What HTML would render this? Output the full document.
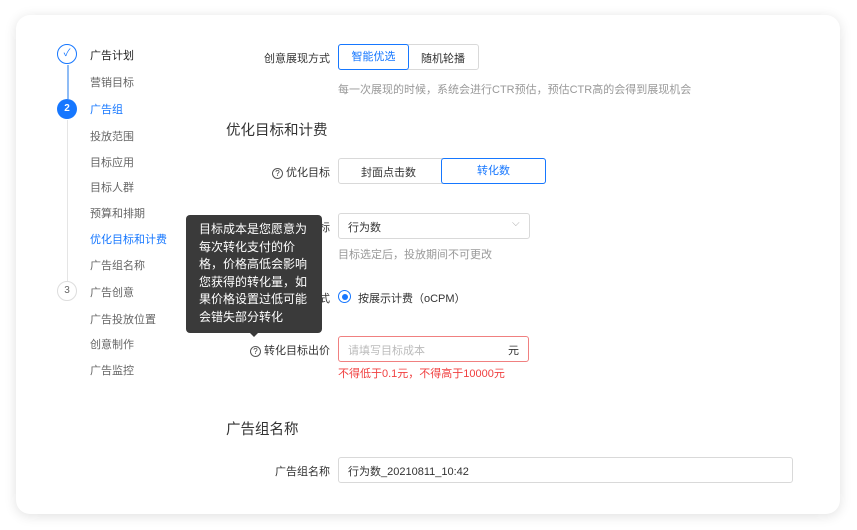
<!DOCTYPE html>
<html><head><meta charset="utf-8"><style>
*{margin:0;padding:0;box-sizing:border-box}
body{width:857px;height:530px;background:#fff;font-family:"Liberation Sans","Noto Sans CJK SC",sans-serif;font-size:11px;color:#333;position:relative;overflow:hidden}
.card{position:absolute;left:16px;top:15px;width:824px;height:499px;background:#fff;border-radius:14px;box-shadow:0 2px 12px rgba(0,0,0,.12)}
.a{position:absolute;white-space:nowrap}
.nav{color:#666}
.circ{position:absolute;width:20px;height:20px;border-radius:50%;text-align:center;line-height:18px;font-size:10px}
.lbl{color:#333;text-align:right}
.box{position:absolute;border:1px solid #d9d9d9;border-radius:3px}
.h{font-size:14.5px;color:#333}
.q{display:inline-block;width:11px;height:11px;border:1px solid #555;border-radius:50%;font-size:8px;line-height:9px;text-align:center;vertical-align:0px;margin-right:3px}
</style></head><body>
<div class="card"></div>
<div class="circ" style="left:57px;top:44px;border:1px solid #1677ff;color:#1677ff">✓</div>
<div style="position:absolute;left:67px;top:65px;width:2px;height:34px;background:#8fbcf5"></div>
<div class="circ" style="left:57px;top:99px;background:#1677ff;color:#fff;font-weight:bold;line-height:20px">2</div>
<div style="position:absolute;left:67px;top:120px;width:1px;height:162px;background:#e5e5e5"></div>
<div class="circ" style="left:57px;top:281px;border:1px solid #ddd;color:#666">3</div>
<div class="a" style="left:90px;top:47px;color:#222">广告计划</div>
<div class="a nav" style="left:90px;top:74px">营销目标</div>
<div class="a" style="left:90px;top:101px;color:#1677ff">广告组</div>
<div class="a nav" style="left:90px;top:128px">投放范围</div>
<div class="a nav" style="left:90px;top:154px">目标应用</div>
<div class="a nav" style="left:90px;top:179px">目标人群</div>
<div class="a nav" style="left:90px;top:205px">预算和排期</div>
<div class="a" style="left:90px;top:231px;color:#1677ff">优化目标和计费</div>
<div class="a nav" style="left:90px;top:257px">广告组名称</div>
<div class="a nav" style="left:90px;top:284px">广告创意</div>
<div class="a nav" style="left:90px;top:311px">广告投放位置</div>
<div class="a nav" style="left:90px;top:336px">创意制作</div>
<div class="a nav" style="left:90px;top:362px">广告监控</div>
<div class="a lbl" style="left:250px;top:50px;width:80px">创意展现方式</div>
<div class="box" style="left:338px;top:44px;width:141px;height:26px"></div>
<div class="box" style="left:338px;top:44px;width:71px;height:26px;border-color:#1677ff;color:#1677ff;text-align:center;line-height:24px">智能优选</div>
<div class="a" style="left:421px;top:50px">随机轮播</div>
<div class="a" style="left:338px;top:81px;color:#999">每一次展现的时候，系统会进行CTR预估，预估CTR高的会得到展现机会</div>
<div class="a h" style="left:226px;top:119px">优化目标和计费</div>
<div class="a lbl" style="left:250px;top:164px;width:80px"><span class="q">?</span>优化目标</div>
<div class="box" style="left:338px;top:158px;width:208px;height:26px"></div>
<div class="a" style="left:361px;top:164px">封面点击数</div>
<div class="box" style="left:441px;top:158px;width:105px;height:26px;border-color:#1677ff;color:#1677ff;text-align:center;line-height:24px">转化数</div>
<div class="a lbl" style="left:250px;top:219px;width:80px">转化目标</div>
<div class="box" style="left:338px;top:213px;width:192px;height:26px"></div>
<div class="a" style="left:348px;top:219px">行为数</div>
<div class="a" style="left:512px;top:218px;color:#aaa;font-size:10px">⌵</div>
<div class="a" style="left:338px;top:246px;color:#999">目标选定后，投放期间不可更改</div>
<div class="a lbl" style="left:250px;top:290px;width:80px">计费方式</div>
<div style="position:absolute;left:338px;top:290px;width:13px;height:13px;border:1px solid #1677ff;border-radius:50%"></div>
<div style="position:absolute;left:341.5px;top:293.5px;width:6px;height:6px;background:#1677ff;border-radius:50%"></div>
<div class="a" style="left:358px;top:290px">按展示计费（oCPM）</div>
<div class="a lbl" style="left:230px;top:342px;width:100px"><span class="q">?</span>转化目标出价</div>
<div class="box" style="left:338px;top:336px;width:191px;height:26px;border-color:#f08080"></div>
<div class="a" style="left:348px;top:342px;color:#bbb">请填写目标成本</div>
<div class="a" style="left:508px;top:342px">元</div>
<div class="a" style="left:338px;top:365px;color:#f04040">不得低于0.1元，不得高于10000元</div>
<div class="a h" style="left:226px;top:418px">广告组名称</div>
<div class="a lbl" style="left:250px;top:463px;width:80px">广告组名称</div>
<div class="box" style="left:338px;top:457px;width:455px;height:26px"></div>
<div class="a" style="left:348px;top:463px">行为数_20210811_10:42</div>
<div style="position:absolute;left:186px;top:215px;width:136px;height:118px;background:#3a3a3a;border-radius:4px;color:#fff;font-size:12px;line-height:17.5px;padding:6px 12px 0 13px">目标成本是您愿意为每次转化支付的价格，价格高低会影响您获得的转化量，如果价格设置过低可能会错失部分转化</div>
<div style="position:absolute;left:250px;top:333px;border:4px solid transparent;border-top-color:#3a3a3a;border-bottom:0"></div>
</body></html>
